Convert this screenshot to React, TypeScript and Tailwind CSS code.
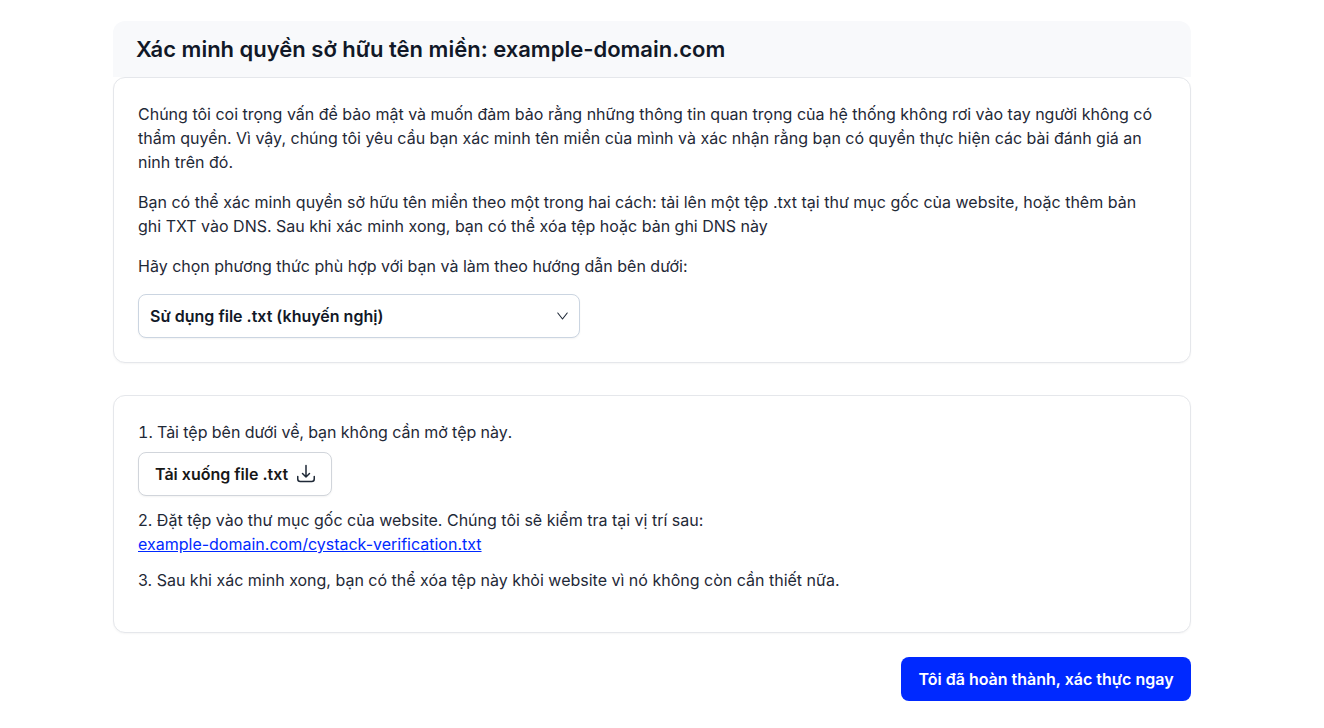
import React from "react";

function ChevronIcon() {
  return (
    <svg width="16" height="16" viewBox="0 0 16 16" fill="none" className="text-[#1f2937]">
      <path d="M3.8 5L8.5 11L13.2 5" stroke="currentColor" strokeWidth="1.1" strokeLinecap="round" strokeLinejoin="round" />
    </svg>
  );
}

function DownloadIcon() {
  return (
    <svg width="20" height="20" viewBox="0 0 20 20" fill="none" className="text-[#1f2937]">
      <path d="M10 1.5v11.5M6.5 9.5l3.5 3.5 3.5-3.5" stroke="currentColor" strokeWidth="1.5" strokeLinecap="round" strokeLinejoin="round" />
      <path d="M1.75 12.5V15a2.5 2.5 0 0 0 2.5 2.5h11.5a2.5 2.5 0 0 0 2.5-2.5v-2.5" stroke="currentColor" strokeWidth="1.5" strokeLinecap="round" strokeLinejoin="round" />
    </svg>
  );
}

export default function App() {
  return (
    <div className="min-h-[728px] bg-white pt-[21px] pr-5 font-['Inter',sans-serif] text-base leading-6 text-[#1f2937]">
      <div className="mx-auto w-[1078px]">
        <div className="h-[56px] rounded-t-xl bg-[#f8f9fb] px-[23px] pt-[13px]">
          <h1 className="text-[22px] font-semibold leading-[30px] text-[#111827]">Xác minh quyền sở hữu tên miền: example-domain.com</h1>
        </div>
        <div className="h-[286px] rounded-xl border border-[#e5e7eb] bg-white px-6 pt-[24px] shadow-[0_1px_2px_rgba(0,0,0,0.04)]">
          <p>Chúng tôi coi trọng vấn đề bảo mật và muốn đảm bảo rằng những thông tin quan trọng của hệ thống không rơi vào tay người không có thẩm quyền. Vì vậy, chúng tôi yêu cầu bạn xác minh tên miền của mình và xác nhận rằng bạn có quyền thực hiện các bài đánh giá an ninh trên đó.</p>
          <p className="mt-4 pr-5">Bạn có thể xác minh quyền sở hữu tên miền theo một trong hai cách: tải lên một tệp .txt tại thư mục gốc của website, hoặc thêm bản ghi TXT vào DNS. Sau khi xác minh xong, bạn có thể xóa tệp hoặc bản ghi DNS này</p>
          <p className="mt-4">Hãy chọn phương thức phù hợp với bạn và làm theo hướng dẫn bên dưới:</p>
          <div className="mt-4 flex h-11 w-[442px] items-center justify-between rounded-lg border border-[#cbd5e1] bg-white pl-[11px] pr-[9px] shadow-[0_1px_2px_rgba(0,0,0,0.05)]">
            <span className="font-semibold text-[#111827]">Sử dụng file .txt (khuyến nghị)</span>
            <ChevronIcon />
          </div>
        </div>
        <div className="mt-8 h-[238px] rounded-xl border border-[#e5e7eb] bg-white px-6 pt-6 shadow-[0_1px_2px_rgba(0,0,0,0.04)]">
          <p className="tabular-nums">1. Tải tệp bên dưới về, bạn không cần mở tệp này.</p>
          <button className="mt-2 flex h-11 w-[194px] items-center gap-2 rounded-lg border border-[#d1d5db] bg-white pl-4 font-semibold text-[#171717] shadow-[0_1px_2px_rgba(0,0,0,0.05)]">
            Tải xuống file .txt
            <DownloadIcon />
          </button>
          <p className="mt-3">2. Đặt tệp vào thư mục gốc của website. Chúng tôi sẽ kiểm tra tại vị trí sau:</p>
          <a href="#" className="block text-[#0029ff] underline">example-domain.com/cystack-verification.txt</a>
          <p className="mt-3">3. Sau khi xác minh xong, bạn có thể xóa tệp này khỏi website vì nó không còn cần thiết nữa.</p>
        </div>
        <div className="mt-6 flex justify-end">
          <button className="h-11 w-[290px] rounded-lg bg-[#0029ff] font-semibold text-white">Tôi đã hoàn thành, xác thực ngay</button>
        </div>
      </div>
    </div>
  );
}
